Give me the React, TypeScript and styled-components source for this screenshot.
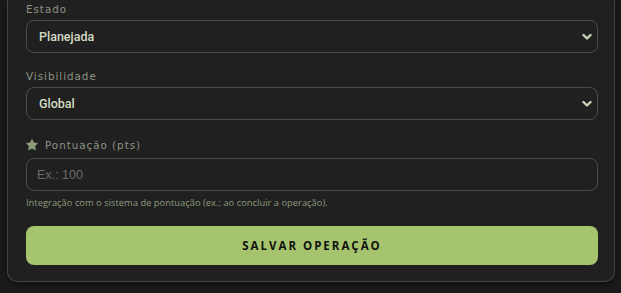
import React from "react";
import styled, { createGlobalStyle } from "styled-components";

const Global = createGlobalStyle`
  html, body { margin: 0; padding: 0; background: #1a1a1a; }
  body { font-family: "Liberation Sans", Arial, sans-serif; }
  * { box-sizing: border-box; }
`;

const Page = styled.div`
  width: 621px;
  height: 293px;
  padding: 0 6px 0 7px;
  overflow: hidden;
`;

const Card = styled.div`
  background: #202020;
  border: 1px solid #44473f;
  border-top: none;
  border-radius: 0 0 10px 10px;
  padding: 0 16px 16px 18px;
  display: flex;
  flex-direction: column;
  box-shadow: 0 2px 6px rgba(0, 0, 0, 0.5);
`;

const Group = styled.div<{ $gap?: number; $mb?: number }>`
  display: flex;
  flex-direction: column;
  gap: ${(p) => p.$gap ?? 4}px;
  margin-bottom: ${(p) => p.$mb ?? 14}px;
`;

const Label = styled.label<{ $h?: number }>`
  display: flex;
  align-items: flex-end;
  gap: 7px;
  height: ${(p) => p.$h ?? 16}px;
  line-height: 13px;
  font-family: "DejaVu Sans", "Open Sans", sans-serif;
  font-size: 10.3px;
  letter-spacing: 1px;
  color: #8e9584;
`;

const SelectBox = styled.div`
  height: 33px;
  border: 1px solid #4b4e45;
  border-radius: 8px;
  display: flex;
  align-items: center;
  padding: 0 12px;
  font-family: Roboto, "Liberation Sans", Arial, sans-serif;
  font-size: 12.5px;
  font-weight: 500;
  color: #d4dcc4;
  justify-content: space-between;
`;

const Chevron = styled.svg`
  width: 10px;
  height: 8px;
  margin-right: -7px;
`;

const InputBox = styled.div`
  height: 33px;
  border: 1px solid #4b4e45;
  border-radius: 8px;
  display: flex;
  align-items: center;
  padding: 0 10px;
  font-family: "Liberation Sans", Arial, sans-serif;
  font-size: 12.5px;
  color: #6c6d68;
`;

const Help = styled.div`
  font-family: "Open Sans", "Noto Sans", sans-serif;
  font-size: 9.4px;
  color: #8c9a7c;
  margin-top: 5px;
  margin-bottom: 17px;
`;

const Button = styled.button`
  height: 39px;
  border: none;
  border-radius: 8px;
  background: #a6c46e;
  color: #101210;
  font-family: "Open Sans", "Noto Sans", sans-serif;
  font-weight: 700;
  font-size: 11.5px;
  letter-spacing: 2px;
  cursor: pointer;
`;

const ChevronIcon = () => (
  <Chevron viewBox="0 0 10 8">
    <path d="M1.5 2 L5 5.5 L8.5 2" stroke="#c8d4b4" strokeWidth="2.4" fill="none" strokeLinecap="round" strokeLinejoin="round" />
  </Chevron>
);

const Star = () => (
  <svg width="12" height="12" viewBox="0 0 24 24" style={{ marginBottom: 1 }}>
    <path
      d="M12 0.8l3.4 6.9 7.6 1.1-5.5 5.4 1.3 7.6L12 18.2l-6.8 3.6 1.3-7.6L1 8.8l7.6-1.1z"
      fill="#8e9f7e"
      stroke="#8e9f7e"
      strokeWidth="1.5"
      strokeLinejoin="round"
    />
  </svg>
);

export default function App() {
  return (
    <>
      <Global />
      <Page>
        <Card>
          <Group>
            <Label>Estado</Label>
            <SelectBox>
              <span>Planejada</span>
              <ChevronIcon />
            </SelectBox>
          </Group>
          <Group>
            <Label>Visibilidade</Label>
            <SelectBox>
              <span>Global</span>
              <ChevronIcon />
            </SelectBox>
          </Group>
          <Group $gap={6} $mb={0}>
            <Label $h={18}>
              <Star />
              Pontuação (pts)
            </Label>
            <InputBox>Ex.: 100</InputBox>
          </Group>
          <Help>Integração com o sistema de pontuação (ex.: ao concluir a operação).</Help>
          <Button>SALVAR OPERAÇÃO</Button>
        </Card>
      </Page>
    </>
  );
}
